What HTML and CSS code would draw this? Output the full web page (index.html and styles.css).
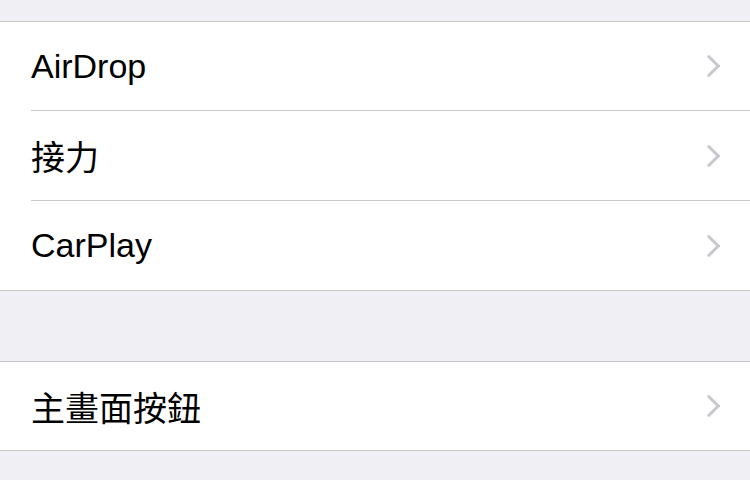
FILE: index.html
```html
<!DOCTYPE HTML>
<html>
    <head>
        <title>一般</title>
        <link rel="stylesheet" href="styles.css">
    </head>
    <body>
        <div class="group first">
            <div class="row"><span class="label">AirDrop</span><span class="chevron"></span></div>
            <div class="row"><span class="label">接力</span><span class="chevron"></span></div>
            <div class="row"><span class="label">CarPlay</span><span class="chevron"></span></div>
        </div>
        <div class="group second">
            <div class="row"><span class="label">主畫面按鈕</span><span class="chevron"></span></div>
        </div>
    </body>
</html>
```
FILE: styles.css
```css
body {
    margin: 0;
    background: #efeff4;
    font-family: "Liberation Sans", "Noto Sans CJK TC", sans-serif;
    color: #000;
}

.group {
    background: #fff;
    border-top: 1px solid #c8c7cc;
    border-bottom: 1px solid #c8c7cc;
}

.first {
    margin-top: 21px;
}

.second {
    margin-top: 70px;
}

.row {
    display: flex;
    align-items: center;
    height: 89px;
    margin-left: 31px;
    padding-right: 33px;
    border-bottom: 1px solid #c8c7cc;
}

.row:first-child {
    height: 88px;
}

.row:last-child {
    border-bottom: none;
}

.label {
    flex: 1;
    font-size: 34px;
}

.chevron {
    width: 13px;
    height: 13px;
    border-top: 3px solid #c7c7cc;
    border-right: 3px solid #c7c7cc;
    transform: rotate(45deg);
}
```
